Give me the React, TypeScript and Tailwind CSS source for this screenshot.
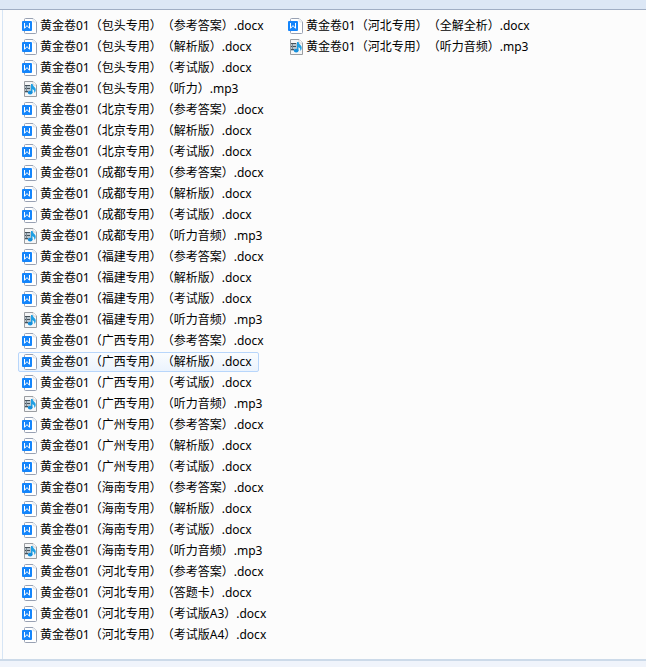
import clsx from "clsx";

type FileEntry = { region: string; part: string; ext: "docx" | "mp3" };

const docx = (region: string, part: string): FileEntry => ({ region, part, ext: "docx" });
const mp3 = (region: string, part: string): FileEntry => ({ region, part, ext: "mp3" });

const files: FileEntry[] = [
    docx("包头", "参考答案"),
    docx("包头", "解析版"),
    docx("包头", "考试版"),
    mp3("包头", "听力"),
    docx("北京", "参考答案"),
    docx("北京", "解析版"),
    docx("北京", "考试版"),
    docx("成都", "参考答案"),
    docx("成都", "解析版"),
    docx("成都", "考试版"),
    mp3("成都", "听力音频"),
    docx("福建", "参考答案"),
    docx("福建", "解析版"),
    docx("福建", "考试版"),
    mp3("福建", "听力音频"),
    docx("广西", "参考答案"),
    docx("广西", "解析版"),
    docx("广西", "考试版"),
    mp3("广西", "听力音频"),
    docx("广州", "参考答案"),
    docx("广州", "解析版"),
    docx("广州", "考试版"),
    docx("海南", "参考答案"),
    docx("海南", "解析版"),
    docx("海南", "考试版"),
    mp3("海南", "听力音频"),
    docx("河北", "参考答案"),
    docx("河北", "答题卡"),
    docx("河北", "考试版A3"),
    docx("河北", "考试版A4"),
    docx("河北", "全解全析"),
    mp3("河北", "听力音频"),
];

const HOVERED = 16;

const DocxIcon = () => (
    <svg viewBox="0 0 16 16" className="size-4 shrink-0" aria-hidden="true">
        <path d="M2.5 1.5Q2.5.5 3.5.5H11L14.5 4V14.5Q14.5 15.5 13.5 15.5H3.5Q2.5 15.5 2.5 14.5Z" fill="#fff" stroke="#98a1b3" />
        <path d="M11 .5V3Q11 4 12 4H14.5" fill="#f4f6f9" stroke="#c3c9d3" strokeWidth=".5" />
        <rect y="3" width="10" height="10" rx="1" fill="#1485fb" />
        <path d="M2.5 5V10.3L5 7.6L7.5 10.3V5" fill="none" stroke="#fff" strokeWidth="1" />
    </svg>
);

const Mp3Icon = () => (
    <svg viewBox="0 0 16 16" className="size-4 shrink-0" aria-hidden="true">
        <path d="M2.5.5H11L14.5 4V15.5H2.5Z" fill="#f5f6f7" stroke="#9a9da1" />
        <path d="M11 .5V4H14.5" fill="#fff" stroke="#b4b7ba" strokeWidth=".6" />
        <rect x="3" y="4" width="6" height="8" fill="#b9c5cd" />
        <path d="M3 4.5H8M3 7.5H8M3 10.5H6" stroke="#46525b" />
        <path d="M4.5 5V10" stroke="#7d8a94" />
        <path d="M9 3H10.5Q10.8 5 12.6 6.2Q15 8.6 12.4 12Q12.8 9.2 10.5 8V11.5H9Z" fill="#1f9fe3" />
        <ellipse cx="8.2" cy="11.6" rx="2.4" ry="1.9" fill="#168fdb" />
    </svg>
);

const FileRow = ({ file, active }: { file: FileEntry; active: boolean }) => (
    <li
        className={clsx(
            "flex w-fit items-center gap-0.5 rounded-xs border pl-[3px] pr-1.5 whitespace-nowrap",
            active ? "border-[#b8d6fb] bg-linear-to-b from-[#fafcfe] to-[#ebf3fd]" : "border-transparent",
        )}
    >
        {file.ext === "docx" ? <DocxIcon /> : <Mp3Icon />}
        <span>{`黄金卷01（${file.region}专用）（${file.part}）.${file.ext}`}</span>
    </li>
);

export default function App() {
    return (
        <div className="flex min-h-screen flex-col bg-[#f0f4fb] font-['Noto_Sans','Noto_Sans_CJK_SC',sans-serif] text-xs text-black [font-kerning:none] [text-spacing-trim:space-all]">
            <header className="h-2.5 border-b border-[#a0aec4] bg-[#dce7f5]" />
            <div className="flex border-b-2 border-[#ccdae9] bg-[#fcfcfc]">
                <div className="w-[3px] shrink-0 border-r border-[#d6e5f5]" />
                <main className="min-w-0 flex-1 overflow-hidden pt-1.5 pb-3.5 pl-[15px]">
                    <ul className="grid auto-cols-[266px] grid-flow-col grid-rows-[repeat(30,20px)] gap-y-px">
                        {files.map((file, i) => (
                            <FileRow key={i} file={file} active={i === HOVERED} />
                        ))}
                    </ul>
                </main>
            </div>
        </div>
    );
}
